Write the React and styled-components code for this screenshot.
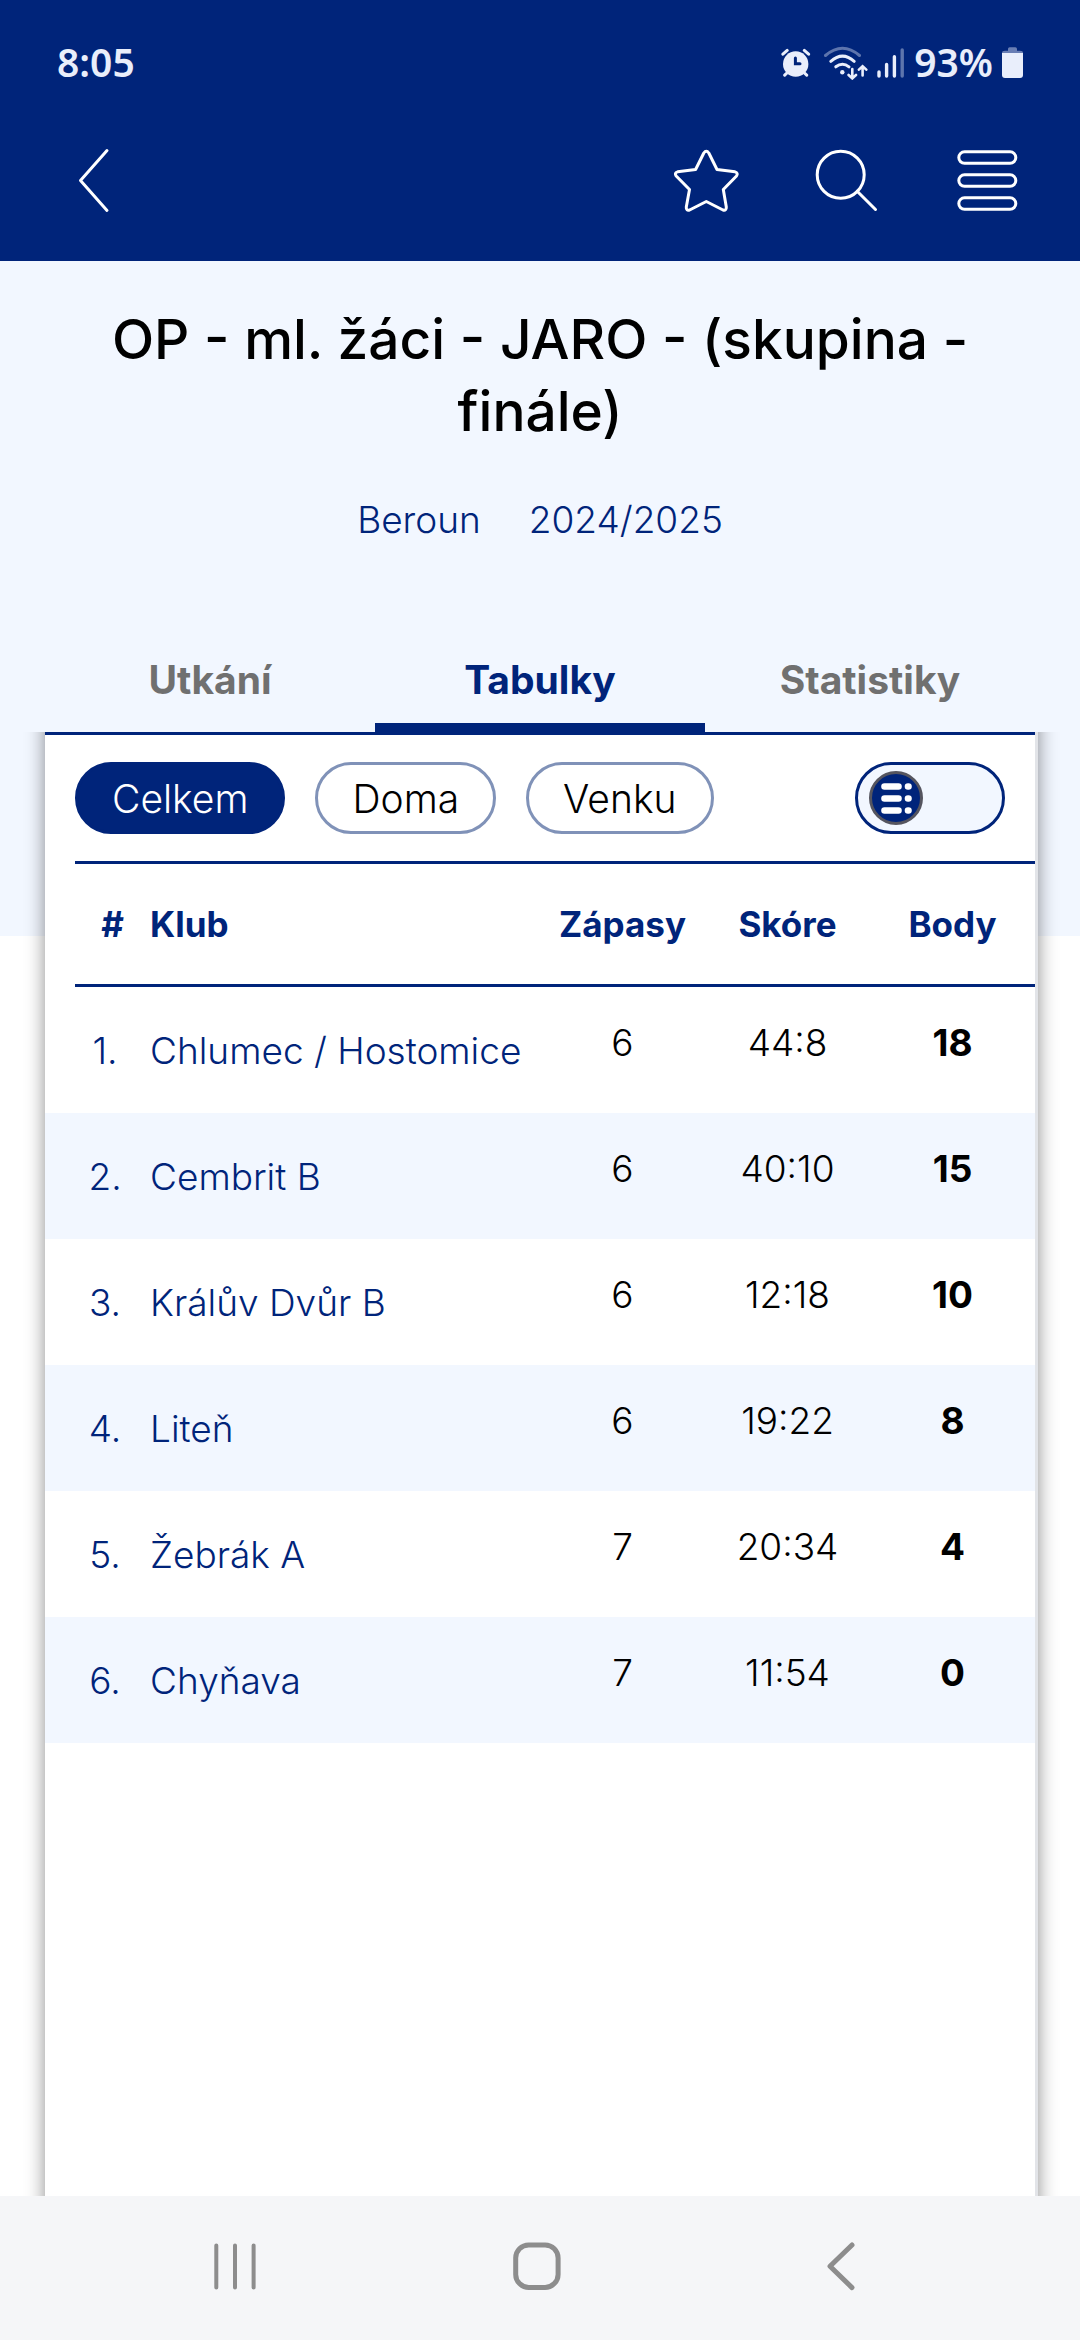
import React, { useState } from "react";
import styled, { createGlobalStyle } from "styled-components";

const NAVY = "#00247a";
const LIGHT = "#f2f7ff";

const TABS = ["Utkání", "Tabulky", "Statistiky"];
const FILTERS = ["Celkem", "Doma", "Venku"];

const TEAMS = [
  { id: 1, name: "Chlumec / Hostomice", games: 6, score: "44:8", points: 18 },
  { id: 2, name: "Cembrit B", games: 6, score: "40:10", points: 15 },
  { id: 3, name: "Králův Dvůr B", games: 6, score: "12:18", points: 10 },
  { id: 4, name: "Liteň", games: 6, score: "19:22", points: 8 },
  { id: 5, name: "Žebrák A", games: 7, score: "20:34", points: 4 },
  { id: 6, name: "Chyňava", games: 7, score: "11:54", points: 0 },
];

const StatusBar = () => (
  <StStatusBar>
    <StStatusText>8:05</StStatusText>
    <StStatusIcons>
      <svg width="34" height="30" viewBox="0 0 34 30" fill="none" strokeLinecap="round">
        <circle cx="14.7" cy="16" r="12.7" fill="#e9eefb" />
        <path
          d="M1.9 6.2L6.2 2.4M23.3 2.4L27.6 6.2M3.7 27.2L7 24M22.4 24L25.7 27.2"
          stroke="#e9eefb"
          strokeWidth="3"
        />
        <path d="M14.4 10V15.8H19" stroke={NAVY} strokeWidth="3" />
      </svg>
      <svg width="44" height="34" viewBox="0 0 44 34" fill="none" stroke="#e9eefb" strokeWidth="3" strokeLinecap="round">
        <path d="M1.5 9.5Q18.5 -5 35.5 9.5" opacity="0.4" />
        <path d="M6.8 15.3Q18.5 5 30.2 15.3" />
        <path d="M11.8 20.8Q18.5 15.6 25 20.8" />
        <circle cx="18.3" cy="26.3" r="2.2" fill="#e9eefb" stroke="none" />
        <path d="M28.3 23V32M24.6 29L28.3 32.4L32 29M38.6 29.5V20.5M34.9 23.6L38.6 20.2L42.3 23.6" strokeWidth="2.6" />
      </svg>
      <svg width="28" height="32" viewBox="0 0 28 32" stroke="#e9eefb" strokeWidth="3.4" strokeLinecap="round">
        <path d="M2 25V29M9.6 17.5V29M17.4 9.8V29" />
        <path d="M25.2 3V29" opacity="0.4" />
      </svg>
      <StStatusText>93%</StStatusText>
      <svg width="21" height="32" viewBox="0 0 21 32" fill="#e9eefb">
        <path d="M6 3.7V2Q6 0.3 7.7 0.3H13.3Q15 0.3 15 2V3.7H18Q21 3.7 21 6H0Q0 3.7 3 3.7Z" opacity="0.45" />
        <path d="M0 6H21V28Q21 31 18 31H3Q0 31 0 28Z" />
      </svg>
    </StStatusIcons>
  </StStatusBar>
);

const Toolbar = () => (
  <StToolbar>
    <StIconButton aria-label="Zpět">
      <svg viewBox="0 0 72 72">
        <path d="M50 6.5L23.5 36.5L50 66.5" />
      </svg>
    </StIconButton>
    <StToolbarActions>
      <StIconButton aria-label="Oblíbené">
        <svg viewBox="0 0 72 72">
          <path d="M34.8 9Q37.3 5.5 39.8 9L48 25.5L66 27.8Q69.5 29 67.5 32L54.3 45.5L57.3 63Q57.5 67 54 66L37.3 57.5L20.6 66Q17 67 17.3 63L20.5 45.5L7.2 32Q5 29 8.6 27.8L26.6 25.5Z" />
        </svg>
      </StIconButton>
      <StIconButton aria-label="Hledat">
        <svg viewBox="0 0 72 72">
          <circle cx="30.7" cy="30.7" r="23.5" />
          <path d="M47.2 47.2L65.5 65.5" />
        </svg>
      </StIconButton>
      <StIconButton aria-label="Menu">
        <svg viewBox="0 0 72 72">
          <rect x="7.8" y="7.8" width="57" height="11.5" rx="5.75" />
          <rect x="7.8" y="30.8" width="57" height="11.5" rx="5.75" />
          <rect x="7.8" y="53.8" width="57" height="11.5" rx="5.75" />
        </svg>
      </StIconButton>
    </StToolbarActions>
  </StToolbar>
);

const Standings = () => (
  <StTable>
    <thead>
      <tr>
        <StHeadRank>#</StHeadRank>
        <StHeadClub>Klub</StHeadClub>
        <StHead>Zápasy</StHead>
        <StHead>Skóre</StHead>
        <StHead>Body</StHead>
      </tr>
    </thead>
    <tbody>
      {TEAMS.map((el) => (
        <StRow key={`team_${el.id}`}>
          <StRank>{el.id}.</StRank>
          <StClub>
            <a href={`#team-${el.id}`}>{el.name}</a>
          </StClub>
          <StValue>{el.games}</StValue>
          <StValue>{el.score}</StValue>
          <StValue $bold>{el.points}</StValue>
        </StRow>
      ))}
    </tbody>
  </StTable>
);

const NavigationBar = () => (
  <StNavigation>
    <StNavButton aria-label="Poslední aplikace">
      <svg viewBox="0 0 72 72">
        <path d="M16.3 13.5V55.5M35 13.5V55.5M53.6 13.5V55.5" strokeWidth="4" />
      </svg>
    </StNavButton>
    <StNavButton aria-label="Domů">
      <svg viewBox="0 0 72 72">
        <rect x="11.7" y="13" width="42.4" height="42.4" rx="13" />
      </svg>
    </StNavButton>
    <StNavButton aria-label="Zpět">
      <svg viewBox="0 0 72 72">
        <path d="M44 13L22 34.3L44 55.6" />
      </svg>
    </StNavButton>
  </StNavigation>
);

const App = () => {
  const [tab, setTab] = useState("Tabulky");
  const [filter, setFilter] = useState("Celkem");
  const [detailed, setDetailed] = useState(false);

  return (
    <>
      <GlobalStyle />
      <StPage>
        <StHeader>
          <StatusBar />
          <Toolbar />
        </StHeader>

        <StMain>
          <StTitle>OP - ml. žáci - JARO - (skupina - finále)</StTitle>
          <StSubtitle>
            <span>Beroun</span>
            <span>2024/2025</span>
          </StSubtitle>

          <StTabs>
            {TABS.map((el) => (
              <StTab key={el} $active={el === tab} onClick={() => setTab(el)}>
                {el}
              </StTab>
            ))}
          </StTabs>

          <StCardArea>
            <StCard>
              <StFilters>
                {FILTERS.map((el) => (
                  <StFilter key={el} $active={el === filter} onClick={() => setFilter(el)}>
                    {el}
                  </StFilter>
                ))}
                <StSwitch $on={detailed}>
                  <StSwitchInput
                    type="checkbox"
                    role="switch"
                    aria-label="Podrobná tabulka"
                    checked={detailed}
                    onChange={(e) => setDetailed(e.target.checked)}
                  />
                  <StKnob>
                    <svg width="48" height="48" viewBox="0 0 48 48" stroke="#fff" strokeWidth="6.6" strokeLinecap="round">
                      <path d="M12.5 12.5H26.5M12.5 24.5H26.5M12.5 36.5H26.5" />
                      <path d="M36 12.5H36.5M36 24.5H36.5M36 36.5H36.5" />
                    </svg>
                  </StKnob>
                </StSwitch>
              </StFilters>
              <Standings />
            </StCard>
          </StCardArea>
        </StMain>

        <NavigationBar />
      </StPage>
    </>
  );
};

export default App;

const GlobalStyle = createGlobalStyle`
  * {
    box-sizing: border-box;
  }
  body {
    margin: 0;
    font-family: Inter, "Liberation Sans", sans-serif;
    font-weight: 300;
    color: #000;
  }
  button {
    font: inherit;
    color: inherit;
    background: none;
    border: none;
    padding: 0;
    cursor: pointer;
  }
  svg {
    display: block;
  }
`;

const StPage = styled.div`
  min-height: 100vh;
  display: flex;
  flex-direction: column;
  background: #fff;
`;

const StHeader = styled.header`
  background: ${NAVY};
  padding: 0 57px 27px;
`;

const StStatusBar = styled.div`
  height: 126px;
  display: flex;
  align-items: center;
  justify-content: space-between;
  color: #e9eefb;
`;

const StStatusText = styled.span`
  padding-bottom: 4px;
  font-family: "Noto Sans", sans-serif;
  font-size: 39px;
  font-weight: 600;
`;

const StStatusIcons = styled.div`
  display: flex;
  align-items: center;
  gap: 9px;
`;

const StToolbar = styled.div`
  height: 108px;
  display: flex;
  align-items: center;
  justify-content: space-between;
`;

const StToolbarActions = styled.div`
  display: flex;
  gap: 69px;
`;

const StIconButton = styled.button`
  width: 72px;
  height: 72px;

  svg {
    fill: none;
    stroke: #fff;
    stroke-width: 3;
    stroke-linecap: round;
    stroke-linejoin: round;
  }
`;

const StMain = styled.main`
  flex: 1;
  display: flex;
  flex-direction: column;
  padding-top: 42px;
  background: linear-gradient(${LIGHT} 675px, #fff 675px);
`;

const StTitle = styled.h1`
  margin: 0;
  padding: 0 90px;
  font-size: 55px;
  font-weight: 500;
  line-height: 72px;
  text-align: center;
`;

const StSubtitle = styled.div`
  margin: 46px 0 89px;
  display: flex;
  justify-content: center;
  gap: 48px;
  font-size: 37px;
  line-height: 54px;
  color: ${NAVY};
`;

const StTabs = styled.nav`
  display: flex;
  padding: 0 45px;
`;

const StTab = styled.button`
  flex: 1;
  height: 96px;
  border-bottom: 9px solid ${({ $active }) => ($active ? NAVY : "transparent")};
  font-size: 39px;
  font-weight: 700;
  color: ${({ $active }) => ($active ? NAVY : "#707070")};
`;

/* cuts the card shadow off at the tab line */
const StCardArea = styled.div`
  flex: 1;
  display: flex;
  padding: 0 42px 0 45px;
  overflow: hidden;
`;

/* runs past the clipped area at both ends, so only the side shadows show */
const StCard = styled.section`
  flex: 1;
  margin: -24px 0;
  padding: 24px 0;
  background: #fff;
  border-right: 3px solid #e2e4e8;
  box-shadow: 0 0 18px rgba(0, 0, 0, 0.45);
`;

const StFilters = styled.div`
  display: flex;
  gap: 30px;
  padding: 27px 30px;
  border-top: 3px solid ${NAVY};
`;

const StFilter = styled.button`
  height: 72px;
  padding: 0 34px;
  border: 3px solid ${({ $active }) => ($active ? NAVY : "#8092b8")};
  border-radius: 36px;
  font-size: 39px;
  background: ${({ $active }) => ($active ? NAVY : "#fff")};
  color: ${({ $active }) => ($active ? "#fff" : "#000")};
`;

const StSwitch = styled.label`
  width: 150px;
  height: 72px;
  margin-left: auto;
  padding: 0 11px;
  display: flex;
  align-items: center;
  justify-content: ${({ $on }) => ($on ? "flex-end" : "flex-start")};
  border: 3px solid ${NAVY};
  border-radius: 36px;
  background: ${LIGHT};
  cursor: pointer;
`;

const StSwitchInput = styled.input`
  position: absolute;
  opacity: 0;
`;

const StKnob = styled.span`
  border: 3px solid #55555f;
  border-radius: 50%;
  background: ${NAVY};
`;

const StTable = styled.table`
  width: 100%;
  table-layout: fixed;
  border-collapse: collapse;
  font-size: 37px;
`;

/* the two rules are backgrounds so that they can stop short of the card edge */
const StHead = styled.th`
  width: 165px;
  height: 126px;
  padding: 0;
  font-size: 35px;
  font-weight: 700;
  color: ${NAVY};
  background: linear-gradient(${NAVY}, ${NAVY}) right top / 100% 3px no-repeat,
    linear-gradient(${NAVY}, ${NAVY}) right bottom / 100% 3px no-repeat;
`;

const StHeadRank = styled(StHead)`
  width: 105px;
  padding-left: 30px;
  background-size: calc(100% - 30px) 3px;
`;

const StHeadClub = styled(StHead)`
  width: auto;
  text-align: left;
`;

const StRow = styled.tr`
  height: 126px;

  &:nth-child(even) {
    background: ${LIGHT};
  }
`;

const StRank = styled.td`
  padding: 0 15px 0 30px;
  text-align: center;
  color: ${NAVY};
`;

const StClub = styled.td`
  padding: 0;
  white-space: nowrap;

  a {
    color: ${NAVY};
    text-decoration: none;
  }
`;

const StValue = styled.td`
  padding: 0 0 15px;
  text-align: center;
  font-weight: ${({ $bold }) => ($bold ? 700 : 300)};
`;

const StNavigation = styled.nav`
  height: 144px;
  display: flex;
  align-items: center;
  justify-content: space-between;
  padding: 0 200px;
  background: #f5f6f8;
`;

const StNavButton = styled.button`
  width: 72px;
  height: 72px;

  svg {
    fill: none;
    stroke: #8d8d8d;
    stroke-width: 5;
    stroke-linecap: round;
    stroke-linejoin: round;
  }
`;
